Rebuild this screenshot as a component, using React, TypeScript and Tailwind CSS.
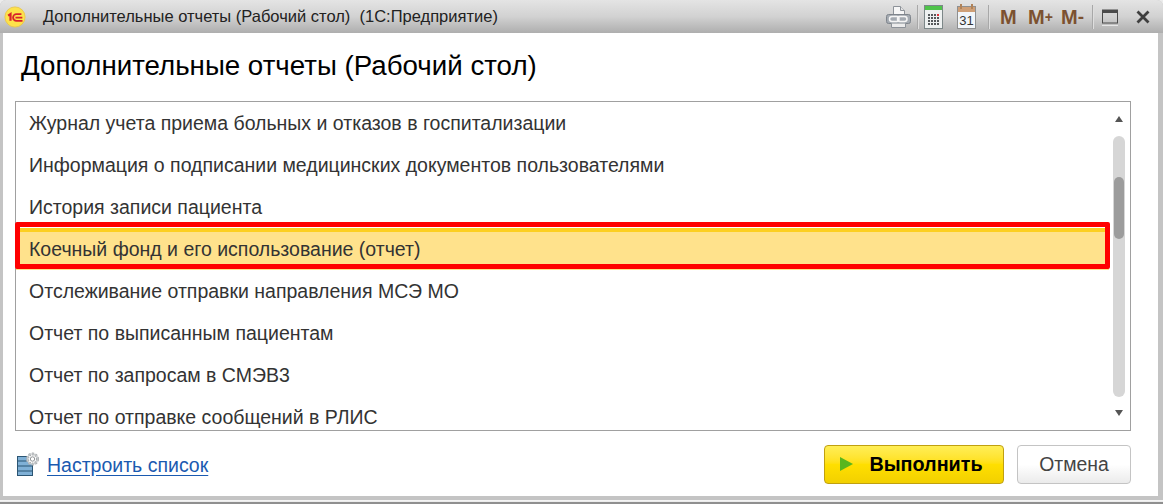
const rows = [
  "Журнал учета приема больных и отказов в госпитализации",
  "Информация о подписании медицинских документов пользователями",
  "История записи пациента",
  "Коечный фонд и его использование (отчет)",
  "Отслеживание отправки направления МСЭ МО",
  "Отчет по выписанным пациентам",
  "Отчет по запросам в СМЭВ3",
  "Отчет по отправке сообщений в РЛИС",
];

function Logo() {
  return (
    <svg width="22" height="22" viewBox="0 0 24 24" className="shrink-0">
      <circle cx="12" cy="12" r="11" fill="#fde24a" stroke="#e9c64a" />
      <path d="M4.5 10.5l2.6-1.7v7.4" fill="none" stroke="#d8222a" strokeWidth="2.4" />
      <path d="M19 8.8h-5.4a3.7 3.7 0 0 0 0 7.4h6.6" fill="none" stroke="#d8222a" strokeWidth="2" />
      <path d="M12.5 12.6h7.5" fill="none" stroke="#d8222a" strokeWidth="1.8" />
    </svg>
  );
}

function PrintLink() {
  return (
    <svg width="25" height="24" viewBox="0 0 25 24">
      <path d="M7.5 11V1.5h7l4 4V11" fill="#f7f7f7" stroke="#8d9299" />
      <path d="M14.5 1.5v4h4" fill="#e2e2e2" stroke="#8d9299" />
      <rect x="0.5" y="9.5" width="24" height="9" rx="2" fill="#a4aab1" stroke="#7f858c" />
      <rect x="3.5" y="11.5" width="9.5" height="5" rx="2.5" fill="none" stroke="#f5f5f5" strokeWidth="1.5" />
      <rect x="11.5" y="11.5" width="9.5" height="5" rx="2.5" fill="none" stroke="#f5f5f5" strokeWidth="1.5" />
      <path d="M5.5 18.5v4h14v-4" fill="#ececec" stroke="#8d9299" />
    </svg>
  );
}

function Calculator() {
  return (
    <svg width="19" height="24" viewBox="0 0 19 24">
      <rect x="0.5" y="0.5" width="18" height="23" fill="#eef1f1" stroke="#7c8788" />
      <rect x="1" y="1" width="17" height="4" fill="#4fc34a" />
      <g fill="#55595c">
        <rect x="4" y="9" width="2" height="2" /><rect x="7" y="9" width="2" height="2" /><rect x="10" y="9" width="2" height="2" />
        <rect x="4" y="12" width="2" height="2" /><rect x="7" y="12" width="2" height="2" /><rect x="10" y="12" width="2" height="2" /><rect x="13" y="12" width="2" height="2" />
        <rect x="4" y="15" width="2" height="2" /><rect x="7" y="15" width="2" height="2" /><rect x="10" y="15" width="2" height="2" /><rect x="13" y="15" width="2" height="2" />
        <rect x="4" y="18" width="2" height="2" /><rect x="7" y="18" width="2" height="2" /><rect x="10" y="18" width="2" height="2" /><rect x="13" y="18" width="2" height="2" />
      </g>
      <rect x="13" y="9" width="2" height="2" fill="#e0323a" />
    </svg>
  );
}

function Calendar() {
  return (
    <svg width="19" height="25" viewBox="0 0 19 25">
      <rect x="0.5" y="2.5" width="18" height="22" fill="#f2f6fa" stroke="#8e8f90" />
      <rect x="1" y="3" width="17" height="5" fill="#cf9f76" />
      <rect x="3" y="0" width="2" height="5" fill="#b08258" />
      <rect x="14" y="0" width="2" height="5" fill="#b08258" />
      <text x="9.5" y="21" textAnchor="middle" fontSize="13" fontFamily="'Liberation Sans', sans-serif" fill="#333">31</text>
    </svg>
  );
}

function ListGear() {
  return (
    <svg width="24" height="25" viewBox="0 0 24 25">
      <rect x="0.5" y="4.5" width="15" height="19" fill="#7fb0d6" stroke="#2b5573" />
      <path d="M1 9h14M1 14h14M1 19h14" stroke="#2b5573" />
      <circle cx="15.5" cy="7" r="5" fill="#fff" stroke="#a9adb0" strokeWidth="3" strokeDasharray="2 1.2" />
      <circle cx="15.5" cy="7" r="5.2" fill="none" stroke="#c5c8ca" strokeWidth="1.2" />
      <circle cx="15.5" cy="7" r="2.2" fill="#fff" stroke="#8f9396" />
    </svg>
  );
}

function Divider() {
  return <div className="w-px h-[24px] bg-[#a8a8a8] border-r border-[#dedede] box-content" />;
}

export default function App() {
  return (
    <div className="w-[1163px] h-[504px] overflow-hidden bg-[#ececec] font-['Liberation_Sans',sans-serif] flex flex-col">
      <div className="h-[500px] shrink-0 flex flex-col bg-[#c4c4c4] rounded-tr-[6px] rounded-tl-[6px] overflow-hidden">
        <header className="h-[33px] shrink-0 flex items-center bg-gradient-to-b from-[#e4e4e4] via-[#d2d2d2] to-[#aeaeae]">
          <div className="pl-[4px] pr-[17px] flex items-center"><Logo /></div>
          <span className="text-[16.5px] text-[#222] whitespace-pre leading-none">
            Дополнительные отчеты (Рабочий стол)  (1С:Предприятие)
          </span>
          <div className="ml-auto flex items-center h-full pr-[13px]">
            <PrintLink />
            <div className="w-[6px]" />
            <Divider />
            <div className="w-[5px]" />
            <Calculator />
            <div className="w-[14px]" />
            <Calendar />
            <div className="w-[12px]" />
            <Divider />
            <div className="flex items-center font-bold text-[#7c5130] text-[20px] leading-none pl-[10px]">
              <span className="w-[28px]">M</span>
              <span className="w-[33px] flex items-center">M<span className="text-[14px]">+</span></span>
              <span className="w-[31px] flex items-center">M<span className="text-[19px]">-</span></span>
            </div>
            <Divider />
            <svg width="16" height="20" viewBox="0 0 16 20" className="ml-[8px]">
              <rect x="0.5" y="3" width="15" height="13" fill="none" stroke="#4b4b4b" />
              <rect x="1" y="3" width="14" height="3" fill="#4b4b4b" />
              <rect x="0" y="18" width="16" height="1" fill="#e6e6e6" />
            </svg>
            <svg width="14" height="14" viewBox="0 0 14 14" className="ml-[18px]">
              <path d="M1.5 1.5l11 11M12.5 1.5l-11 11" stroke="#3f3f3f" strokeWidth="2.8" />
            </svg>
          </div>
        </header>

        <main className="flex-1 ml-[3px] mr-[5px] mb-[4px] bg-white flex flex-col pl-[12px] pr-[27px]">
          <h1 className="h-[68px] shrink-0 flex items-center pl-[6px] pb-[3px] text-[27.7px] font-normal text-black leading-none">
            Дополнительные отчеты (Рабочий стол)
          </h1>
          <div className="relative h-[330px] shrink-0 border border-[#a0a0a0] flex">
            <ul className="flex-1 min-w-0 overflow-hidden">
              {rows.map((r, i) => (
                <li
                  key={r}
                  className={
                    "h-[42px] flex items-center pl-[13px] text-[19.5px] text-[#333] whitespace-nowrap" +
                    (i === 3 ? " bg-[#ffe28c] border-t-[4px] border-[#fccf22] pb-[2px]" : " pt-[2px]")
                  }
                >
                  {r}
                </li>
              ))}
            </ul>
            <div className="w-[20px] shrink-0 mr-[1px] relative flex flex-col items-center">
              <div className="mt-[14px] w-0 h-0 border-l-[4px] border-r-[4px] border-b-[6px] border-l-transparent border-r-transparent border-b-[#555]" />
              <div className="mt-[14px] w-[12px] h-[261px] rounded-[6px] bg-[#d6d6d6] flex justify-center">
                <div className="mt-[41px] w-[10px] h-[62px] rounded-[5px] bg-[#9c9c9c]" />
              </div>
              <div className="mt-[13px] w-0 h-0 border-l-[4px] border-r-[4px] border-t-[6px] border-l-transparent border-r-transparent border-t-[#555]" />
            </div>
            <div className="absolute left-[-1px] top-[120px] w-[1095px] h-[47px] border-[5px] border-[#ff0000] rounded-[2px] pointer-events-none" />
          </div>
          <footer className="flex-1 flex items-center justify-between pt-[1px]">
            <div className="flex items-center pl-[2px] gap-[6px]">
              <div className="pt-[1px]"><ListGear /></div>
              <a className="pt-[3px] text-[19.5px] text-[#1a5ab0] underline underline-offset-[3px] leading-none">Настроить список</a>
            </div>
            <div className="flex items-center gap-[13px]">
              <button className="w-[180px] h-[39px] rounded-[4px] border border-[#c0a010] bg-gradient-to-b from-[#ffee55] via-[#ffdf00] to-[#f2d000] flex items-center justify-center gap-[16px] text-[19.8px] font-bold text-black pr-[5px]">
                <span className="w-0 h-0 border-t-[7px] border-b-[7px] border-l-[13px] border-t-transparent border-b-transparent border-l-[#58b61e]" />
                <span className="pt-[1px]">Выполнить</span>
              </button>
              <button className="w-[114px] h-[39px] rounded-[4px] border border-[#c4c4c4] bg-gradient-to-b from-white via-white to-[#ebebeb] text-[19.4px] text-[#444] pt-[1px]">
                Отмена
              </button>
            </div>
          </footer>
        </main>
      </div>
      <div className="flex-1 border-t border-[#f4f4f4]">
        <div className="h-[2px] mt-[1px] bg-[#8f8f8f]" />
      </div>
    </div>
  );
}
